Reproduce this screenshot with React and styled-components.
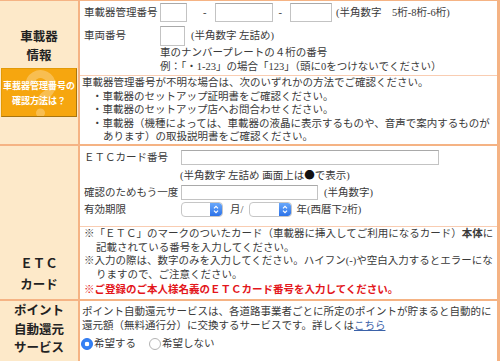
import React from "react";
import styled, { createGlobalStyle } from "styled-components";

const ORANGE = "#f5b384";
const LIGHT = "#f9cdb2";

const GlobalStyle = createGlobalStyle`
  body {
    margin: 0;
    background: #fff;
    font-family: "Liberation Serif", "Noto Sans CJK JP", serif;
    color: #3a3a3a;
  }
`;

const Form = styled.div`
  width: 500px;
  box-sizing: border-box;
  border-top: 1px solid ${ORANGE};
  border-right: 3px solid ${ORANGE};
  font-size: 10.5px;
`;

const Section = styled.div`
  display: flex;
  border-bottom: 2px solid ${ORANGE};
  &:last-child {
    border-bottom: none;
  }
`;

const Head = styled.div`
  width: 80px;
  flex-shrink: 0;
  box-sizing: border-box;
  background: #fde9c9;
  border-right: 2px solid ${ORANGE};
  padding-top: ${(p) => p.$top}px;
  display: flex;
  flex-direction: column;
  align-items: center;
  font-family: "Liberation Serif", "Noto Sans CJK JP", serif;
  font-weight: bold;
  font-size: 12.5px;
  line-height: ${(p) => p.$lh}px;
  color: #222;
  text-align: center;
`;

const HelpButton = styled.button`
  position: relative;
  overflow: hidden;
  margin-top: 2px;
  width: 76px;
  height: 49px;
  padding: 0;
  background: #f6a60f;
  border: 1px solid #e39a06;
  border-right-color: #a8750f;
  border-bottom-color: #a8750f;
  color: #fff;
  font-family: "Noto Sans CJK JP", sans-serif;
  font-weight: bold;
  font-size: 9px;
  line-height: 15px;
  cursor: pointer;
`;

const HelpMark = styled.svg`
  position: absolute;
  left: 0;
  top: 0;
`;

const HelpText = styled.span`
  position: relative;
  display: block;
`;

const Body = styled.div`
  flex: 1;
  display: flex;
  flex-direction: column;
  min-width: 0;
`;

const Cell = styled.div`
  box-sizing: border-box;
  height: ${(p) => p.$h}px;
  padding: ${(p) => p.$pad};
  white-space: nowrap;
  line-height: 13.5px;
  & + & {
    border-top: 1px solid ${LIGHT};
  }
`;

const Row = styled.div`
  display: flex;
  align-items: center;
  height: ${(p) => p.$h}px;
  margin-top: ${(p) => p.$mt || 0}px;
`;

const Label = styled.span`
  width: ${(p) => p.$w}px;
  flex-shrink: 0;
`;

const Box = styled.input`
  width: ${(p) => p.$w}px;
  height: ${(p) => p.$h}px;
  box-sizing: border-box;
  margin: 0;
  padding: 0 2px;
  border: 1px solid #c3c3c3;
  border-top-color: #a9a9a9;
  background: #fff;
  outline: none;
`;

const Dash = styled.span`
  margin: 0 ${(p) => p.$r}px 0 ${(p) => p.$l}px;
`;

const Note = styled.span`
  margin-left: ${(p) => p.$ml}px;
`;

const Dot = styled.span`
  font-family: "Noto Sans CJK JP", sans-serif;
  color: #111;
`;

const Indented = styled.div`
  padding-left: ${(p) => p.$pl}px;
  line-height: ${(p) => p.$lh || 13.5}px;
`;

const Bullets = styled.ul`
  margin: 0;
  padding: 0 0 0 21px;
  list-style: none;
  li {
    text-indent: -11px;
  }
`;

const Hanging = styled.p`
  margin: ${(p) => p.$mt || 0}px 0 0;
  padding-left: 12px;
  text-indent: -12px;
  color: ${(p) => (p.$alert ? "#e3161b" : "inherit")};
  font-weight: ${(p) => (p.$alert ? "bold" : "normal")};
`;

const SelectBox = styled.div`
  width: ${(p) => p.$w}px;
  height: 15px;
  box-sizing: border-box;
  border: 1px solid #c6c6c6;
  border-radius: 4px;
  background: #fff;
  display: flex;
  justify-content: flex-end;
  overflow: hidden;
`;

const Stepper = styled.span`
  width: 12px;
  height: 100%;
  background: linear-gradient(#69a8fb, #2c72e8);
  border-radius: 0 3px 3px 0;
  display: flex;
  align-items: center;
  justify-content: center;
`;

const Text = styled.p`
  margin: 0;
`;

const Link = styled.a`
  color: #3b62a9;
  text-decoration: underline;
`;

const RadioGroup = styled.div`
  display: flex;
  align-items: center;
  height: 20px;
  margin-top: 2px;
  margin-left: -1px;
`;

const Radio = styled.span`
  width: 12px;
  height: 12px;
  box-sizing: border-box;
  border-radius: 50%;
  margin-right: 1px;
  border: 1px solid ${(p) => (p.$on ? "#2a74ee" : "#b3b3b3")};
  background: ${(p) =>
    p.$on
      ? "radial-gradient(circle, #fff 0 2px, #3481f5 2.6px)"
      : "#fff"};
`;

const RadioLabel = styled.span`
  margin-right: 13px;
`;

const Select = ({ w }) => (
  <SelectBox $w={w}>
    <Stepper>
      <svg width="6" height="9" viewBox="0 0 6 9">
        <path
          d="M1 3.3 L3 1.3 L5 3.3 M1 5.7 L3 7.7 L5 5.7"
          fill="none"
          stroke="#fff"
          strokeWidth="1.2"
        />
      </svg>
    </Stepper>
  </SelectBox>
);

export default function App() {
  return (
    <>
      <GlobalStyle />
      <Form>
        <Section>
          <Head $top={27} $lh={19}>
            <div>車載器</div>
            <div>情報</div>
            <HelpButton>
              <HelpMark width="76" height="49" viewBox="0 0 76 49">
                <path
                  d="M27.5 16 A11 11 0 1 1 45 25 Q38.5 29 38.5 34 V36"
                  fill="none"
                  stroke="rgba(255,255,255,0.28)"
                  strokeWidth="8"
                />
                <circle cx="38.5" cy="44" r="4.5" fill="rgba(255,255,255,0.28)" />
              </HelpMark>
              <HelpText>車載器管理番号の</HelpText>
              <HelpText>確認方法は？</HelpText>
            </HelpButton>
          </Head>
          <Body>
            <Cell $h={74} $pad="2px 0 0 4px">
              <Row $h={19}>
                <Label $w={76}>車載器管理番号</Label>
                <Box $w={27} $h={19} />
                <Dash $l={16} $r={8}>-</Dash>
                <Box $w={58} $h={19} />
                <Dash $l={6} $r={8}>-</Dash>
                <Box $w={42} $h={19} />
                <Note $ml={4}>(半角数字　5桁-8桁-6桁)</Note>
              </Row>
              <Row $h={20} $mt={4}>
                <Label $w={76}>車両番号</Label>
                <Box $w={25} $h={20} />
                <Note $ml={6}>(半角数字 左詰め)</Note>
              </Row>
              <Indented $pl={76}>
                車のナンバープレートの４桁の番号
                <br />
                例：「・1-23」の場合「123」（頭に0をつけないでください）
              </Indented>
            </Cell>
            <Cell $h={69} $pad="0 0 0 2px">
              <Text>
                車載器管理番号が不明な場合は、次のいずれかの方法でご確認ください。
              </Text>
              <Bullets>
                <li>・車載器のセットアップ証明書をご確認ください。</li>
                <li>・車載器のセットアップ店へお問合わせください。</li>
                <li>
                  ・車載器（機種によっては、車載器の液晶に表示するものや、音声で案内するものが
                  <br />
                  あります）の取扱説明書をご確認ください。
                </li>
              </Bullets>
            </Cell>
          </Body>
        </Section>

        <Section>
          <Head $top={108} $lh={21}>
            <div>ＥＴＣ</div>
            <div>カード</div>
          </Head>
          <Body>
            <Cell $h={80} $pad="4px 0 0 4px">
              <Row $h={15}>
                <Label $w={97}>ＥＴＣカード番号</Label>
                <Box $w={258} $h={15} />
              </Row>
              <Row $h={20}>
                <Label $w={96} />
                <span>
                  (半角数字 左詰め 画面上は<Dot>●</Dot>で表示)
                </span>
              </Row>
              <Row $h={15}>
                <Label $w={97}>確認のためもう一度</Label>
                <Box $w={137} $h={15} />
                <Note $ml={6}>(半角数字)</Note>
              </Row>
              <Row $h={15} $mt={2}>
                <Label $w={97}>有効期限</Label>
                <Select w={42} />
                <Note $ml={7}>月/</Note>
                <Note $ml={6}>
                  <Select w={43} />
                </Note>
                <Note $ml={4}>年(西暦下2桁)</Note>
              </Row>
            </Cell>
            <Cell $h={73} $pad="0 0 0 4px">
              <Hanging>
                ※「ＥＴＣ」のマークのついたカード（車載器に挿入してご利用になるカード）<b>本体</b>に
                <br />
                記載されている番号を入力してください。
              </Hanging>
              <Hanging>
                ※入力の際は、数字のみを入力してください。ハイフン(-)や空白入力するとエラーにな
                <br />
                りますので、ご注意ください。
              </Hanging>
              <Hanging $alert $mt={2}>
                ※ご登録のご本人様名義のＥＴＣカード番号を入力してください。
              </Hanging>
            </Cell>
          </Body>
        </Section>

        <Section>
          <Head $top={1} $lh={18.5}>
            <div>ポイント</div>
            <div>自動還元</div>
            <div>サービス</div>
          </Head>
          <Body>
            <Cell $h={61} $pad="4px 0 0 2px">
              <Text>
                ポイント自動還元サービスは、各道路事業者ごとに所定のポイントが貯まると自動的に
                <br />
                還元額（無料通行分）に交換するサービスです。詳しくは
                <Link href="#">こちら</Link>
              </Text>
              <RadioGroup>
                <Radio $on />
                <RadioLabel>希望する</RadioLabel>
                <Radio />
                <RadioLabel>希望しない</RadioLabel>
              </RadioGroup>
            </Cell>
          </Body>
        </Section>
      </Form>
    </>
  );
}
